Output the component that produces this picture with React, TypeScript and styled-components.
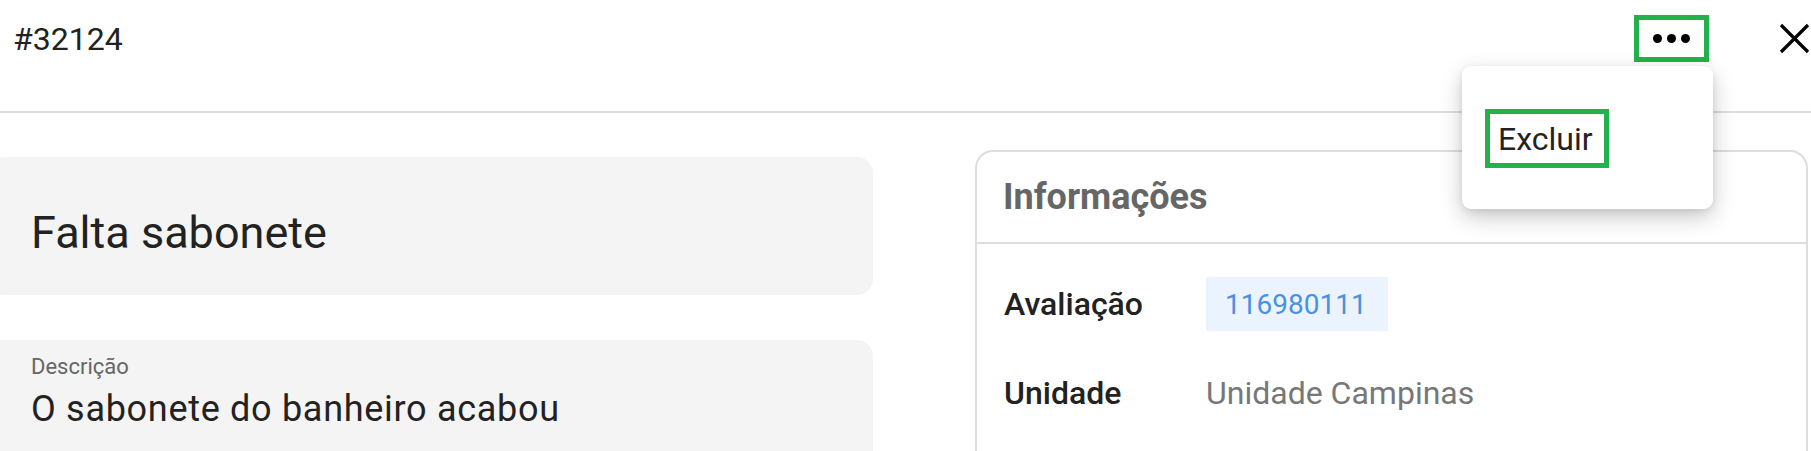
import React from "react";
import styled, { createGlobalStyle } from "styled-components";

const GlobalStyle = createGlobalStyle`
  html, body {
    margin: 0;
    padding: 0;
    background: #fff;
    overflow: hidden;
  }
  body {
    font-family: Roboto, "Liberation Sans", Arial, sans-serif;
    color: #222;
  }
`;

const Page = styled.div`
  width: 1811px;
  height: 451px;
  overflow: hidden;
`;

const Header = styled.header`
  box-sizing: border-box;
  height: 113px;
  padding: 15px 1px 0 13px;
  border-bottom: 2px solid #dddddd;
  display: flex;
  align-items: flex-start;
`;

const HeaderRow = styled.div`
  flex: 1;
  height: 47px;
  display: flex;
  align-items: center;
`;

const TicketId = styled.h1`
  margin: 0;
  font-size: 32px;
  line-height: 40px;
  font-weight: 400;
  color: #222;
  flex: 1;
`;

const MenuAnchor = styled.div`
  position: relative;
  margin-right: 70px;
`;

const DotsButton = styled.button`
  box-sizing: border-box;
  width: 75px;
  height: 47px;
  border: 5px solid #22b14c;
  background: #fff;
  padding: 0;
  display: flex;
  align-items: center;
  justify-content: center;
  gap: 5px;
  cursor: pointer;
`;

const Dot = styled.span`
  width: 9px;
  height: 9px;
  border-radius: 50%;
  background: #000;
`;

const CloseButton = styled.button`
  width: 31px;
  height: 31px;
  padding: 0;
  border: 0;
  background: none;
  display: flex;
  cursor: pointer;
`;

const Dropdown = styled.div`
  position: absolute;
  top: 51px;
  right: -4px;
  box-sizing: border-box;
  width: 251px;
  height: 143px;
  padding: 43px 0 0 23px;
  background: #fff;
  border-radius: 9px;
  box-shadow: 0 8px 22px rgba(0, 0, 0, 0.22), 0 2px 6px rgba(0, 0, 0, 0.08);
  z-index: 10;
`;

const DropdownItem = styled.button`
  box-sizing: border-box;
  height: 59px;
  padding: 0 11px 0 8px;
  border: 5px solid #22b14c;
  background: #fff;
  font-family: Roboto, "Liberation Sans", Arial, sans-serif;
  font-size: 32px;
  color: #222;
  display: flex;
  align-items: center;
  cursor: pointer;
`;

const Main = styled.main`
  display: flex;
  align-items: flex-start;
  padding: 37px 3px 0 0;
`;

const LeftColumn = styled.section`
  width: 885px;
  margin: 7px 0 0 -12px;
  display: flex;
  flex-direction: column;
  gap: 45px;
`;

const FieldCard = styled.div<{ $tall?: boolean }>`
  box-sizing: border-box;
  background: #f4f4f4;
  border-radius: 16px;
  padding: ${(p) => (p.$tall ? "14px 20px 0 43px" : "12px 20px 0 43px")};
  height: ${(p) => (p.$tall ? "170px" : "138px")};
  display: flex;
  flex-direction: column;
  justify-content: ${(p) => (p.$tall ? "flex-start" : "center")};
`;

const TitleText = styled.div`
  font-size: 45px;
  color: #222;
`;

const FieldLabel = styled.div`
  font-size: 22px;
  color: #666;
`;

const FieldValue = styled.div`
  margin-top: 9px;
  font-size: 36px;
  letter-spacing: 0.7px;
  color: #222;
`;

const InfoCard = styled.aside`
  flex: 1;
  margin-left: 102px;
  box-sizing: border-box;
  height: 330px;
  border: 2px solid #dddddd;
  border-radius: 18px;
`;

const InfoHeader = styled.div`
  height: 90px;
  border-bottom: 2px solid #dddddd;
  display: flex;
  align-items: center;
  padding-left: 26px;
`;

const InfoTitle = styled.h2`
  margin: 0;
  font-size: 36px;
  font-weight: 700;
  color: #666;
`;

const InfoBody = styled.div`
  padding: 33px 0 0 27px;
  display: flex;
  flex-direction: column;
  gap: 35px;
`;

const InfoRow = styled.div`
  display: flex;
  align-items: center;
  height: 54px;
`;

const InfoLabel = styled.span`
  width: 202px;
  font-size: 32px;
  font-weight: 500;
  color: #222;
`;

const InfoValue = styled.span`
  font-size: 32px;
  color: #777;
`;

const Badge = styled.span`
  box-sizing: border-box;
  height: 54px;
  padding: 0 21px 0 19px;
  display: inline-flex;
  align-items: center;
  background: #ebf4fe;
  color: #4a90e2;
  font-size: 28px;
`;

const CloseIcon = () => (
  <svg width="31" height="31" viewBox="0 0 31 31">
    <path d="M2 2 L29 29 M29 2 L2 29" stroke="#000" strokeWidth="3.2" strokeLinecap="butt" />
  </svg>
);

const App: React.FC = () => {
  return (
    <Page>
      <GlobalStyle />
      <Header>
        <HeaderRow>
          <TicketId>#32124</TicketId>
          <MenuAnchor>
            <DotsButton aria-label="Mais opções">
              <Dot />
              <Dot />
              <Dot />
            </DotsButton>
            <Dropdown>
              <DropdownItem>Excluir</DropdownItem>
            </Dropdown>
          </MenuAnchor>
          <CloseButton aria-label="Fechar">
            <CloseIcon />
          </CloseButton>
        </HeaderRow>
      </Header>
      <Main>
        <LeftColumn>
          <FieldCard>
            <TitleText>Falta sabonete</TitleText>
          </FieldCard>
          <FieldCard $tall>
            <FieldLabel>Descrição</FieldLabel>
            <FieldValue>O sabonete do banheiro acabou</FieldValue>
          </FieldCard>
        </LeftColumn>
        <InfoCard>
          <InfoHeader>
            <InfoTitle>Informações</InfoTitle>
          </InfoHeader>
          <InfoBody>
            <InfoRow>
              <InfoLabel>Avaliação</InfoLabel>
              <Badge>116980111</Badge>
            </InfoRow>
            <InfoRow>
              <InfoLabel>Unidade</InfoLabel>
              <InfoValue>Unidade Campinas</InfoValue>
            </InfoRow>
          </InfoBody>
        </InfoCard>
      </Main>
    </Page>
  );
};

export default App;
